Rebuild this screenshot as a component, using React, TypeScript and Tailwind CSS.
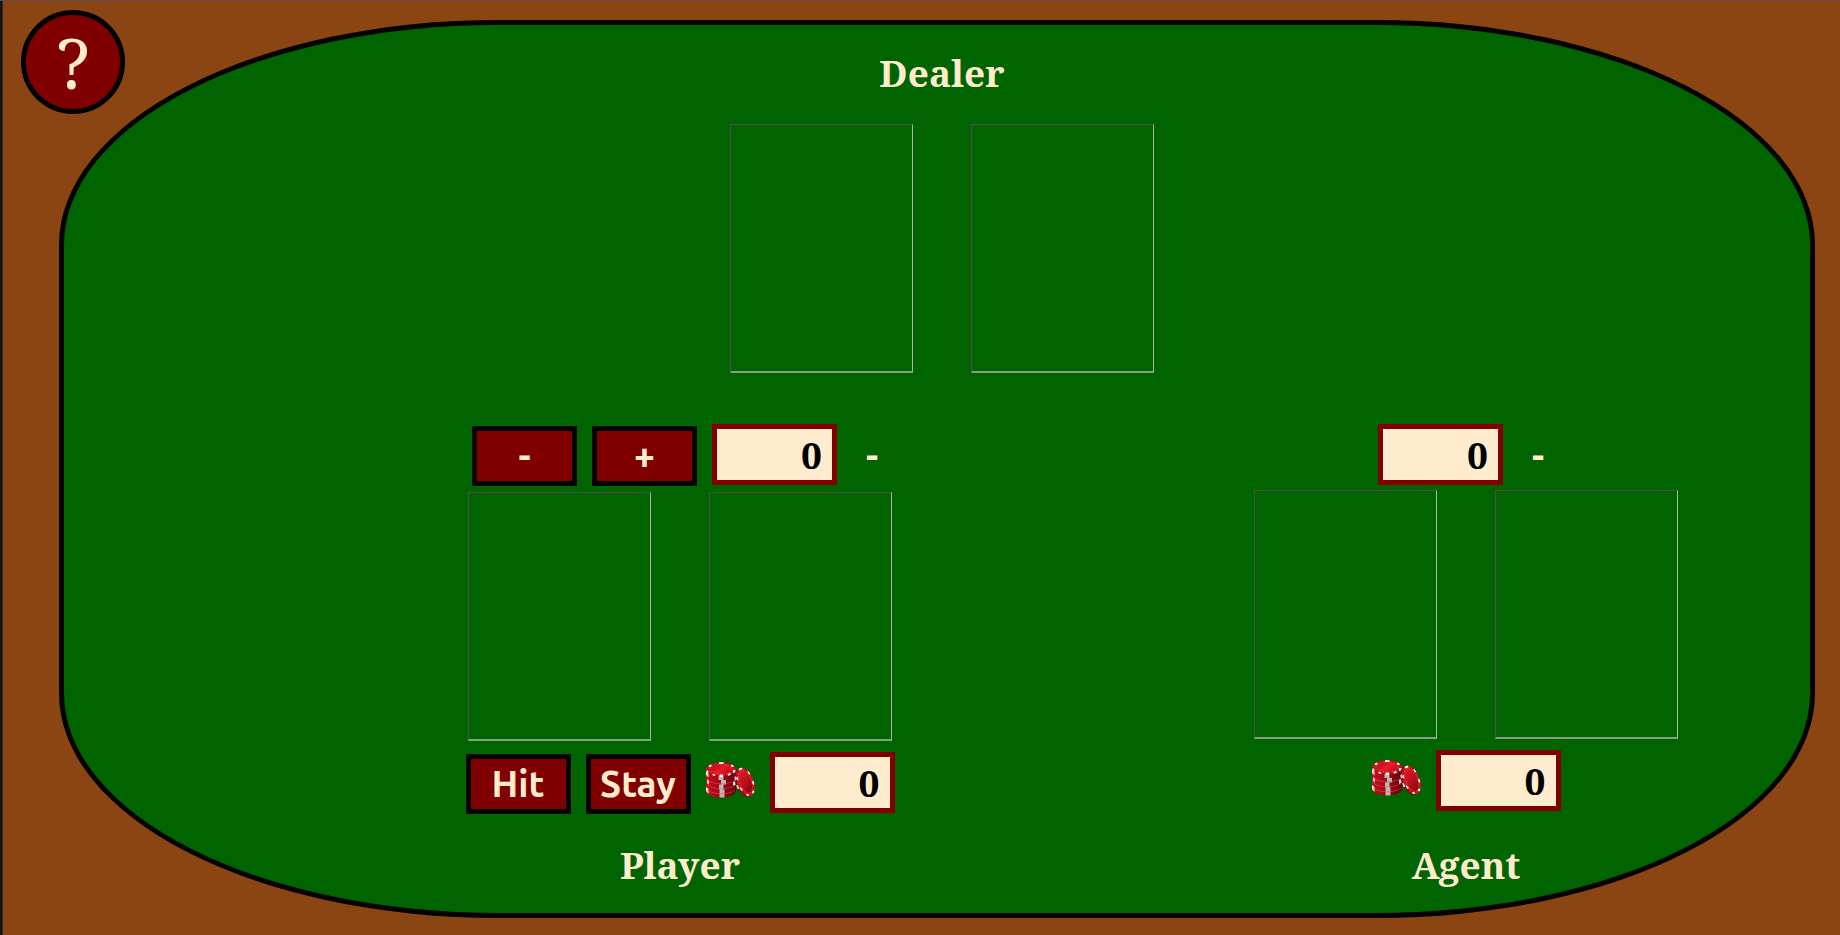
import React from "react";

const serif = "font-['Noto_Serif','DejaVu_Serif_Condensed','DejaVu_Serif',serif]";
const sans = "font-['Ubuntu','Noto_Sans',sans-serif]";

function Title({ children }: { children: React.ReactNode }) {
  return (
    <h2 className={`${serif} text-center text-[37px] leading-[50px] font-bold text-[#ffebcd]`}>
      {children}
    </h2>
  );
}

function Cards() {
  const card =
    "h-[249px] w-[183px] border border-b-2 border-t-[#57484f] border-l-[#57484f] border-r-[#aab2aa] border-b-[#86a086]";
  return (
    <div className="flex justify-center gap-[58px]">
      <div className={card} />
      <div className={card} />
    </div>
  );
}

function GameButton({ label, name }: { label: string; name?: string }) {
  return (
    <button
      type="button"
      aria-label={name}
      className={`${sans} h-[60px] w-[105px] border-[5px] border-black bg-[#800000] text-center text-[37px] leading-[50px] font-semibold text-[#ffebcd]`}
    >
      {label}
    </button>
  );
}

function Amount({ name }: { name: string }) {
  return (
    <input
      type="text"
      readOnly
      aria-label={name}
      value="0"
      className={`${serif} h-[61px] w-[125px] border-[5px] border-[#800000] bg-[#ffebcd] pr-2.5 text-right text-[37px] leading-[51px] font-bold text-black`}
    />
  );
}

function Score() {
  return (
    <span className={`${sans} w-9 pl-3.5 text-[37px] leading-[50px] font-semibold text-[#ffebcd]`}>
      -
    </span>
  );
}

function Chips() {
  return (
    <svg width="49" height="36" viewBox="0 0 49 36" aria-hidden="true" className="mt-2.5 self-start">
      <defs>
        <linearGradient id="side" x1="0" x2="1">
          <stop offset="0" stopColor="#c80c1a" />
          <stop offset="0.5" stopColor="#a00814" />
          <stop offset="1" stopColor="#640008" />
        </linearGradient>
        <linearGradient id="face" x1="0" y1="0" x2="1" y2="0.6">
          <stop offset="0" stopColor="#a40a14" />
          <stop offset="0.6" stopColor="#ea1c28" />
          <stop offset="1" stopColor="#c00c18" />
        </linearGradient>
        <linearGradient id="lean" x1="0" y1="0" x2="0.4" y2="1">
          <stop offset="0" stopColor="#ee1c28" />
          <stop offset="1" stopColor="#940810" />
        </linearGradient>
      </defs>
      <path d="M0 7v22c1 4 7 6.500 15 6.500S29 33 30 29V7z" fill="url(#side)" />
      <path d="M0 9l2.500 2.500v4L0 13zM1 17l2 1.500v4L1 21zM0 25l2.500 2v5L0 29z" fill="#f4e4e4" />
      <path d="M12.500 14h5v4h-5zM15 18h5v4.500h-5zM13 22.500h4.500v5H13zM13.500 27.500h5v8h-5z" fill="#bdb4b4" />
      <path d="M27 20l4-2v4l-4 2z" fill="#dcdcdc" />
      <path
        d="M1 18c4 3 9 3.600 14 3.600S26 21 29 18M1 23c4 3 9 3.600 14 3.600S26 26 29 23M1 28c4 3 9 3.600 14 3.600S26 31 29 28"
        fill="none"
        stroke="#d8606a"
        strokeWidth="0.500"
      />
      <ellipse cx="15" cy="7.300" rx="14.900" ry="7.200" fill="#c40e1a" />
      <path d="M13 .300h4.500v1.700H13zM2.500 4l2-1.600 1.500 1.200L4 5.400zM26 2.500l2 1.700-1.500 1-2-1.500zM.5 8.500H2l.8 2-1.800.3zM27 8h2.500v2.500l-2.500.500zM7 11.800l2.500.9-.8 1.300-2.700-1zM13.500 12.500h3.500v2.500h-3.500zM21.500 12l2.500-.9 1 1.700-2.700 1z" fill="#fff" />
      <ellipse cx="15" cy="7.300" rx="11" ry="5" fill="url(#face)" />
      <ellipse cx="15" cy="7.300" rx="11" ry="5" fill="none" stroke="#f5bcbc" strokeOpacity="0.600" strokeWidth="0.600" strokeDasharray="1.600 1.600" />
      <g transform="rotate(-22 39 20)">
        <ellipse cx="37.300" cy="20" rx="8" ry="14.600" fill="#8c0812" />
        <path d="M30.500 12l2.200-1v3.500l-2.200.8zM29.500 20h2v4h-2z" fill="#d8d0d0" />
        <ellipse cx="39.500" cy="20" rx="8.200" ry="14.900" fill="#cc101c" />
        <path d="M38 5.300h3.500v2H38zM45 11l1.200.300.8 3-1.400.2zM45.600 22h1.700l-.5 3.500h-1.500zM42.500 31l2 .500-1.700 2.300-1.500-.8zM35.500 31.500l2.200.8v2l-2-.8zM31.700 23.500h1.600l.7 3.200-1.600.4zM32.300 13l1.500-.700.4 2.400-1.900 1z" fill="#fff" />
        <ellipse cx="39.500" cy="20" rx="6" ry="11.900" fill="url(#lean)" />
        <ellipse cx="39.500" cy="20" rx="6" ry="11.900" fill="none" stroke="#f5bcbc" strokeOpacity="0.500" strokeWidth="0.600" strokeDasharray="1.600 1.600" />
      </g>
    </svg>
  );
}

export default function App() {
  return (
    <div className="relative flex min-h-screen border-t border-t-[#5f5153] bg-[#8b4513]">
      <div className="w-[3px] border-r border-[#2b2d30] bg-[#141414]" />
      <button
        type="button"
        aria-label="Help"
        className={`${serif} absolute top-[9px] left-[21px] size-[104px] rounded-full border-[5px] border-black bg-[#800000] text-[70px] leading-[94px] text-[#ffebcd]`}
      >
        ?
      </button>
      <main className="mt-[19px] mr-[25px] mb-[17px] ml-14 flex flex-1 flex-col rounded-[25%] border-[5px] border-black bg-[#006400] pt-[23px] pb-[23px] pl-2.5">
        <section className="flex flex-col gap-[26px]">
          <Title>Dealer</Title>
          <Cards />
        </section>
        <div className="mt-[51px] grid flex-1 grid-cols-[344fr_524fr_262fr_524fr_82fr]">
          <section className="col-start-2 flex flex-col">
            <div className="mb-1.5 flex items-baseline justify-center gap-[15px]">
              <GameButton label="-" name="Lower bet" />
              <GameButton label="+" name="Raise bet" />
              <Amount name="Player bet" />
              <Score />
            </div>
            <Cards />
            <div className="mt-[11px] flex items-baseline justify-center gap-[15px]">
              <GameButton label="Hit" />
              <GameButton label="Stay" />
              <Chips />
              <Amount name="Player chips" />
            </div>
            <div className="mt-auto">
              <Title>Player</Title>
            </div>
          </section>
          <section className="col-start-4 flex flex-col">
            <div className="mb-[5px] flex items-baseline justify-center gap-[15px]">
              <Amount name="Agent bet" />
              <Score />
            </div>
            <Cards />
            <div className="mt-[11px] flex items-baseline justify-center gap-[15px]">
              <Chips />
              <Amount name="Agent chips" />
            </div>
            <div className="mt-auto">
              <Title>Agent</Title>
            </div>
          </section>
        </div>
      </main>
    </div>
  );
}
